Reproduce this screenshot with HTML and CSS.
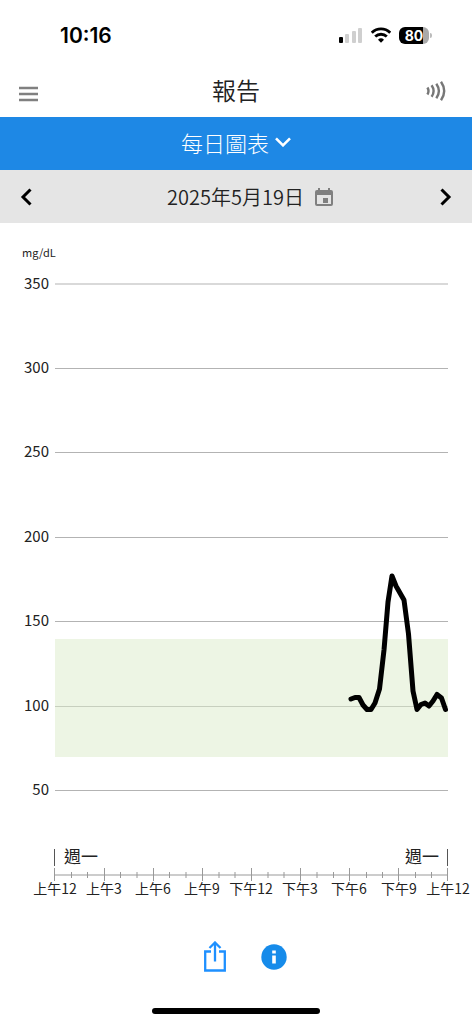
FILE: index.html
```html
<!DOCTYPE html>
<html lang="zh-Hant">
<head>
<meta charset="utf-8">
<meta name="viewport" content="width=device-width, initial-scale=1">
<title>報告</title>
<link rel="stylesheet" href="styles.css">
</head>
<body>
<div class="app">
  <div class="status">
    <span class="clock">10:16</span>
    <div class="status-icons">
      <svg class="signal" width="24" height="16" viewBox="0 0 24 16" aria-hidden="true">
        <rect x="0" y="10" width="4" height="6" rx="1"/>
        <g fill="#cfcfcf"><rect x="6" y="7" width="4" height="9" rx="1"/><rect x="13" y="4" width="4" height="12" rx="1"/><rect x="19" y="1" width="4" height="15" rx="1"/></g>
      </svg>
      <svg class="wifi" width="20" height="16" viewBox="0 0 20 16" fill="none" stroke="#000" stroke-width="2.8" aria-hidden="true">
        <path d="M.8 5.700a13.200 13.200 0 0 1 18.400 0"/><path d="M4.200 9.600a8.300 8.300 0 0 1 11.600 0"/><path d="M7 12.800a4.300 4.300 0 0 1 6 0L10 15.800z" fill="#000" stroke="none"/>
      </svg>
      <div class="battery"><span class="battery-body">80</span><span class="battery-cap"></span></div>
    </div>
  </div>

  <header class="header">
    <button class="icon-button" aria-label="選單">
      <svg width="20" height="16" viewBox="0 0 20 16" stroke="#808080" stroke-width="2.3"><path d="M0 2h19M0 8h19M0 14h19"/></svg>
    </button>
    <h1 class="title">報告</h1>
    <button class="icon-button scan" aria-label="掃描">
      <svg width="20" height="20" viewBox="0 0 20 20" fill="none" stroke="#777" stroke-width="2.4"><path d="M1.400 6.500q2.200 3.500 0 7M5.600 4.200q4 5.800 0 11.600M10.300 2.700q5.200 7.300 0 14.600M15 .8q6.400 9.200 0 18.400"/></svg>
    </button>
  </header>

  <button class="report-picker">每日圖表
    <svg width="16" height="10" viewBox="0 0 16 10" fill="none" stroke="#fff" stroke-width="2.6" aria-hidden="true"><path d="M1 1.300l7 7 7-7"/></svg>
  </button>

  <nav class="date-bar">
    <button class="icon-button" aria-label="前一天">
      <svg width="12" height="18" viewBox="0 0 12 18" fill="none" stroke="#000" stroke-width="3"><path d="M10.500 1.500L3 9l7.500 7.500"/></svg>
    </button>
    <button class="date">2025年5月19日
      <svg width="18" height="20" viewBox="0 0 18 20" aria-hidden="true"><path fill="#808080" fill-rule="evenodd" d="M3 1h2v2h8V1h2v2h1a2 2 0 0 1 2 2v12a2 2 0 0 1-2 2H2a2 2 0 0 1-2-2V5a2 2 0 0 1 2-2h1zM2 8v9h14V8z"/><rect x="8" y="11" width="5" height="5" fill="#808080"/></svg>
    </button>
    <button class="icon-button" aria-label="後一天">
      <svg width="12" height="18" viewBox="0 0 12 18" fill="none" stroke="#000" stroke-width="3"><path d="M1.500 1.500L9 9l-7.500 7.500"/></svg>
    </button>
  </nav>

  <main>
    <svg class="chart" viewBox="0 0 472 682" role="img" aria-label="每日葡萄糖圖表">
      <text class="unit" x="22" y="34">mg/dL</text>
      <path class="grid" d="M55 61H448M55 145.500H448M55 229.500H448M55 314.500H448M55 398.500H448M55 483.500H448M55 567.500H448"/>
      <rect class="target" x="55" y="416" width="393" height="118"/>
      <g class="y-labels">
        <text x="49" y="66">350</text><text x="49" y="150">300</text><text x="49" y="234">250</text><text x="49" y="319">200</text><text x="49" y="403">150</text><text x="49" y="488">100</text><text x="49" y="572">50</text>
      </g>
      <polyline class="curve" points="351,476 355,474.500 359,474.500 363,482 367,486.500 371,486.500 375,480 379.500,466 384,427 388,379 392,353 396,363 400,370 404,377 408.500,411 413,468 417,486.500 421,481.500 425,480 429,483 433,478 437,471.500 441.500,475 445.500,486.500"/>
      <path class="day-edge" d="M54.500 626v17M447.500 626v17"/>
      <text class="day" x="64" y="640">週一</text>
      <text class="day day-end" x="439" y="640">週一</text>
      <path class="axis" d="M55 652H448M54.500 645v13M104.500 645v13M153.500 645v13M202.500 645v13M251.500 645v13M300.500 645v13M349.500 645v13M398.500 645v13M447.500 645v13"/>
      <path class="axis" d="M71.500 649v6M87.500 649v6M120.500 649v6M137 649v6M169.500 649v6M186 649v6M219 649v6M235 649v6M268 649v6M284 649v6M317 649v6M333.500 649v6M366.500 649v6M382.500 649v6M415.500 649v6M431.500 649v6"/>
      <g class="x-labels">
        <text x="55" y="671">上午12</text><text x="104" y="671">上午3</text><text x="153" y="671">上午6</text><text x="202" y="671">上午9</text><text x="251" y="671">下午12</text><text x="300" y="671">下午3</text><text x="349" y="671">下午6</text><text x="399" y="671">下午9</text><text x="448" y="671">上午12</text>
      </g>
    </svg>
  </main>

  <footer class="actions">
    <button class="icon-button" aria-label="分享">
      <svg width="22" height="32" viewBox="0 0 22 32" fill="none" stroke="#1e90ff" stroke-width="2.3"><path d="M7 10.500H1.200v19h19.600v-19H15M11 20.500V2M5.500 7L11 1.500 16.500 7"/></svg>
    </button>
    <button class="icon-button" aria-label="資訊">
      <svg width="26" height="26" viewBox="0 0 26 26"><circle cx="13" cy="13" r="12.700" fill="#168bea"/><path fill="#fff" d="M11.200 6.500h3.600v3h-3.600zM11.200 11.500h3.600v8h-3.600z"/></svg>
    </button>
  </footer>
  <div class="home-indicator"></div>
</div>
</body>
</html>
```
FILE: styles.css
```css
* { box-sizing: border-box; }
body {
  margin: 0;
  background: #fff;
  color: #222;
  font-family: "Noto Sans CJK TC", sans-serif;
}
button {
  border: 0;
  padding: 0;
  background: none;
  color: inherit;
  font: inherit;
}
svg { display: block; }
.app {
  display: flex;
  flex-direction: column;
  min-height: 100vh;
}
.status {
  display: flex;
  justify-content: space-between;
  align-items: center;
  height: 66px;
  padding: 4px 40px 0 60px;
  color: #000;
  font-family: Inter, sans-serif;
}
.clock { font-size: 21px; font-weight: 600; }
.status-icons { display: flex; align-items: center; gap: 8px; }
.battery { display: flex; align-items: center; gap: 1px; }
.battery-body {
  width: 30px;
  height: 17px;
  border-radius: 6px;
  background: linear-gradient(90deg, #000 80%, #aaa 80%);
  color: #fff;
  font-size: 14px;
  font-weight: 700;
  line-height: 17px;
  text-align: center;
}
.battery-cap {
  width: 2px;
  height: 5px;
  border-radius: 0 2px 2px 0;
  background: #bbb;
}
.header {
  display: grid;
  grid-template-columns: 40px 1fr 40px;
  align-items: center;
  height: 51px;
  padding: 0 19px;
}
.header .icon-button { padding-top: 4px; }
.header .scan { justify-self: end; padding: 0 7px 2px 0; }
.title {
  margin: 0;
  padding-bottom: 3px;
  font-size: 24px;
  font-weight: 350;
  line-height: 48px;
  text-align: center;
}
.report-picker {
  display: flex;
  justify-content: center;
  align-items: center;
  gap: 6px;
  height: 53px;
  padding-bottom: 3px;
  background: #1e88e5;
  color: #fff;
  font-size: 22px;
  font-weight: 300;
}
.date-bar {
  display: flex;
  justify-content: space-between;
  align-items: center;
  height: 53px;
  padding: 0 20px;
  background: #e5e5e5;
}
.date {
  display: flex;
  align-items: center;
  gap: 11px;
  padding-left: 28px;
  font-size: 20px;
  font-weight: 350;
}
.chart { width: 100%; height: auto; overflow: visible; }
.chart text { fill: #222; }
.unit { font-size: 11px; }
.grid { stroke: #b3b3b3; stroke-width: 1; }
.target { fill: #dcecc9; fill-opacity: 0.5; }
.y-labels { font-size: 15px; text-anchor: end; }
.curve {
  fill: none;
  stroke: #000;
  stroke-width: 5;
  stroke-linecap: round;
  stroke-linejoin: round;
}
.day-edge { stroke: #555; stroke-width: 1; }
.day { font-size: 17px; }
.day-end { text-anchor: end; }
.axis { stroke: #999; stroke-width: 1; }
.x-labels { font-size: 14px; text-anchor: middle; }
.actions {
  display: flex;
  justify-content: center;
  align-items: center;
  gap: 35px;
  height: 103px;
  padding-left: 18px;
}
.home-indicator {
  width: 168px;
  height: 6px;
  margin: auto auto 10px;
  border-radius: 3px;
  background: #000;
}
```
